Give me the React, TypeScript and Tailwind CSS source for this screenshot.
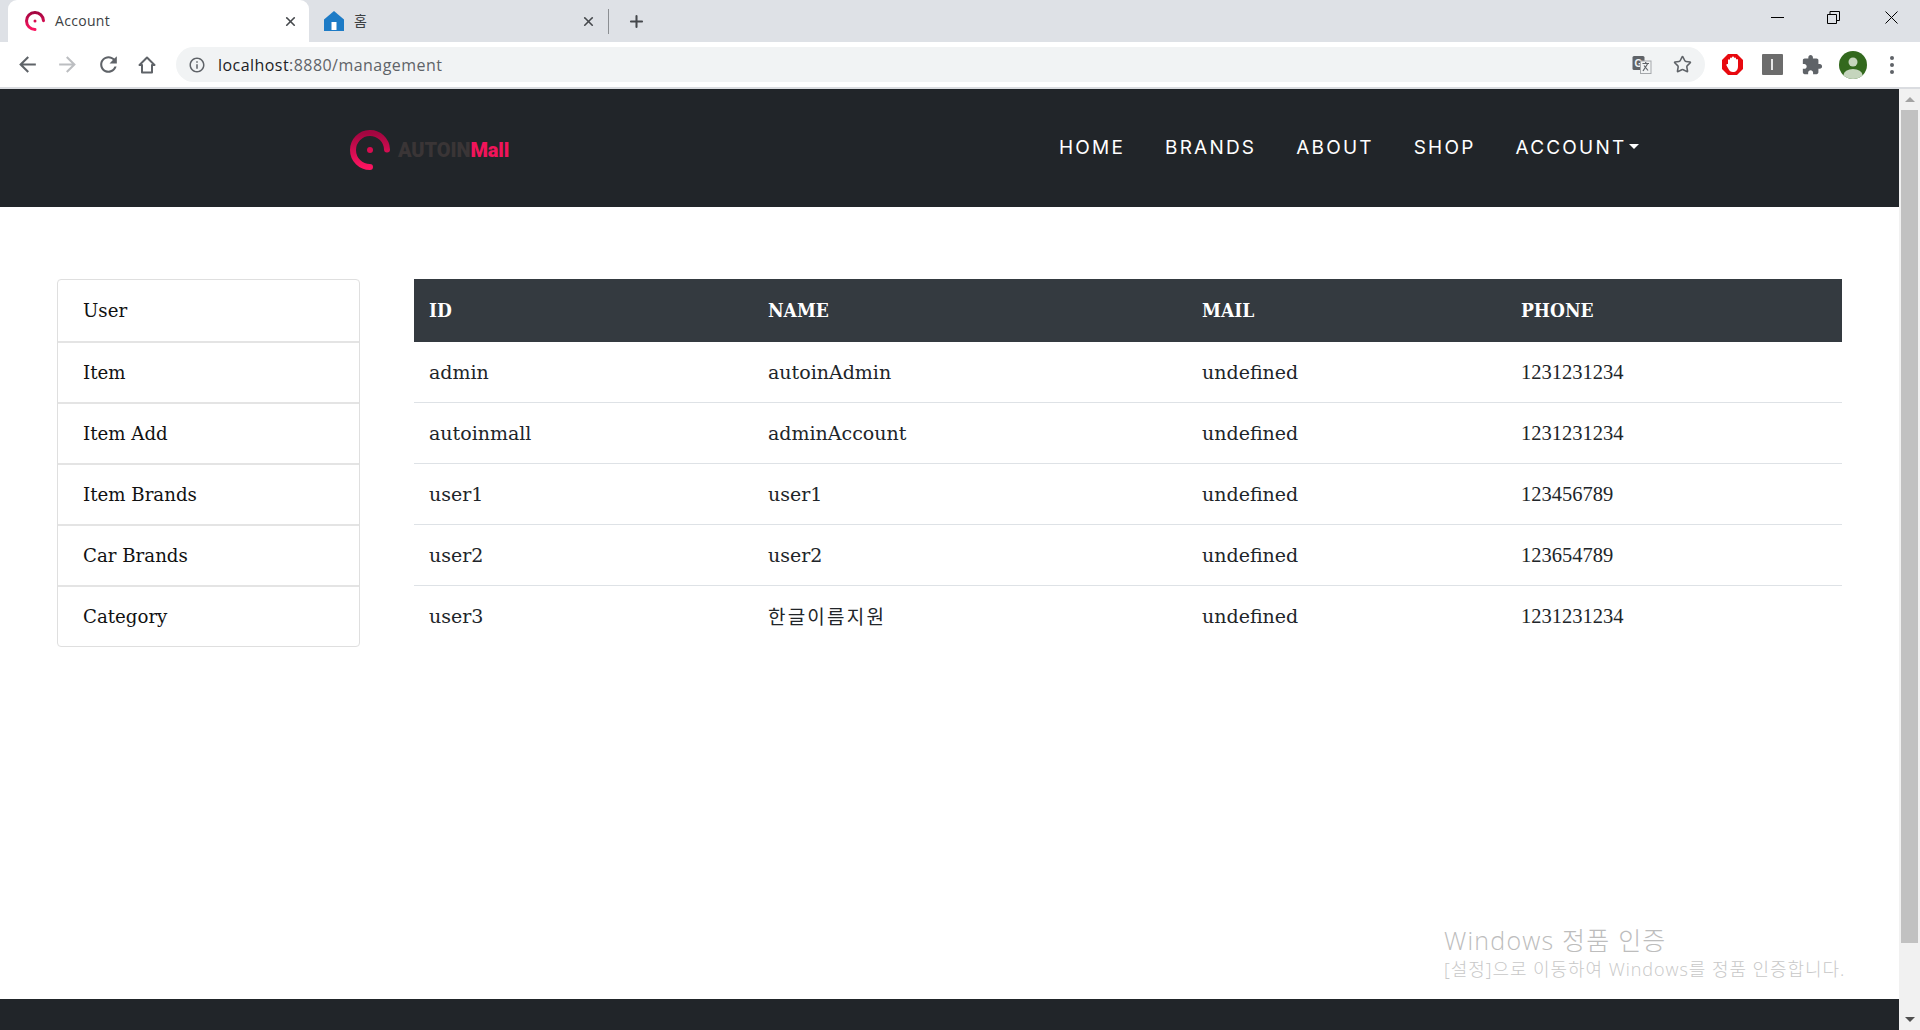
import { Star, X, Plus } from "lucide-react";

const SANS = "font-['Open_Sans','Noto_Sans_CJK_KR',sans-serif]";
const SLAB = "font-['DejaVu_Serif','Noto_Sans_CJK_KR',serif]";

const rows = [
  ["admin", "autoinAdmin", "undefined", "1231231234"],
  ["autoinmall", "adminAccount", "undefined", "1231231234"],
  ["user1", "user1", "undefined", "123456789"],
  ["user2", "user2", "undefined", "123654789"],
  ["user3", "한글이름지원", "undefined", "1231231234"],
];
const side = ["User", "Item", "Item Add", "Item Brands", "Car Brands", "Category"];
const nav = ["HOME", "BRANDS", "ABOUT", "SHOP"];

function Logo({ size, id }: { size: number; id: string }) {
  return (
    <svg width={size} height={size} viewBox="0 0 40 40" className="shrink-0">
      <defs>
        <linearGradient id={id} x1="0" y1="0" x2="0" y2="1">
          <stop offset="0" stopColor="#a30640" />
          <stop offset="1" stopColor="#fb1460" />
        </linearGradient>
      </defs>
      <path d="M37 19.500A17 17 0 1 0 20 37" fill="none" stroke={`url(#${id})`} strokeWidth="6" strokeLinecap="round" />
      <circle cx="20" cy="20" r="3" fill="#d80c50" />
    </svg>
  );
}

function Tab({ active, title, icon, shift }: { active?: boolean; title: string; icon: React.ReactNode; shift: string }) {
  return (
    <div className={`w-[301px] h-[42px] flex items-center rounded-t-[9px] ${shift} ${active ? "bg-white" : ""}`}>
      {icon}
      <span className={`ml-[10px] mb-[2px] flex-1 text-[14px] tracking-[0.3px] text-[#3c4043] ${SANS}`}>{title}</span>
      <X size={15} strokeWidth={2.6} className="text-[#45484c]" />
    </div>
  );
}

function Slot({ w, children }: { w: number; children: React.ReactNode }) {
  return <div className="flex items-center justify-center shrink-0" style={{ width: w }}>{children}</div>;
}

function Mat({ d, size, color }: { d: string; size: number; color: string }) {
  return (
    <svg width={size} height={size} viewBox="0 0 24 24" fill={color}>
      <path d={d} />
    </svg>
  );
}

const BACK = "M20 11H7.830l5.590-5.590L12 4l-8 8 8 8 1.410-1.410L7.830 13H20v-2z";
const FORWARD = "M4 11h12.170l-5.590-5.590L12 4l8 8-8 8-1.410-1.410L16.170 13H4v-2z";
const RELOAD = "M17.650 6.350C16.200 4.900 14.210 4 12 4c-4.420 0-7.990 3.580-7.990 8s3.570 8 7.990 8c3.730 0 6.840-2.550 7.730-6h-2.080c-.82 2.330-3.040 4-5.650 4-3.310 0-6-2.690-6-6s2.690-6 6-6c1.660 0 3.140.69 4.220 1.780L13 11h7V4l-2.350 2.350z";
const INFO = "M11 7h2v2h-2zm0 4h2v6h-2zm1-9C6.480 2 2 6.480 2 12s4.480 10 10 10 10-4.480 10-10S17.520 2 12 2zm0 18c-4.410 0-8-3.590-8-8s3.590-8 8-8 8 3.590 8 8-3.590 8-8 8z";
const EXT = "M20.500 11H19V7c0-1.100-.9-2-2-2h-4V3.500C13 2.120 11.880 1 10.500 1S8 2.120 8 3.500V5H4c-1.100 0-1.990.9-1.990 2v3.800H3.500c1.490 0 2.700 1.210 2.700 2.700s-1.210 2.700-2.700 2.700H2V20c0 1.100.9 2 2 2h3.800v-1.500c0-1.490 1.210-2.700 2.700-2.700 1.490 0 2.700 1.210 2.700 2.700V22H17c1.100 0 2-.9 2-2v-4h1.500c1.380 0 2.500-1.120 2.500-2.500S21.880 11 20.500 11z";

export default function App() {
  return (
    <div className="w-[1920px] h-[1030px] overflow-hidden relative flex flex-col bg-white">
      {/* tab strip */}
      <div className="h-[42px] bg-[#dee1e6] flex items-center pl-[8px] shrink-0">
        <Tab active title="Account" shift="pl-[17px] pr-[11px]" icon={<Logo size={20} id="fav" />} />
        <Tab
          title="홈"
          shift="pl-[15px] pr-[14px]"
          icon={
            <svg width="20" height="20" viewBox="0 0 20 20" className="shrink-0">
              <path d="M0 8.500 10 0l10 8.500V20H0z" fill="#1d7bc6" />
              <rect x="7.500" y="11" width="5" height="8" fill="#fff" />
            </svg>
          }
        />
        <div className="w-px h-[25px] bg-[#8b8e92] ml-[-2px]" />
        <Plus size={19} strokeWidth={2.6} className="ml-[18px] text-[#45484c]" />
        <div className="flex-1" />
        <div className="flex items-center h-full">
          <div className="w-[13px] h-px bg-black mr-[43px] mb-[8px]" />
          <svg width="13" height="13" viewBox="0 0 13 13" className="mr-[45px] mb-[8px]">
            <path d="M.5 3.500h9v9h-9zM3 3.500V.5h9.500v9H9.500" fill="none" stroke="#000" />
          </svg>
          <svg width="13" height="13" viewBox="0 0 13 13" className="mr-[22px] mb-[8px]">
            <path d="M.5.5l12 12M12.500.5l-12 12" stroke="#000" />
          </svg>
        </div>
      </div>

      {/* toolbar */}
      <div className="h-[47px] bg-white border-b-2 border-[#dadce0] flex items-start pt-[5px] shrink-0 pl-[7px]">
        <div className="flex items-center h-[35px]">
          <Slot w={40}><Mat d={BACK} size={25} color="#5f6368" /></Slot>
          <Slot w={41}><Mat d={FORWARD} size={25} color="#bcbec1" /></Slot>
          <Slot w={40}><Mat d={RELOAD} size={25} color="#5f6368" /></Slot>
          <Slot w={38}>
            <svg width="20" height="20" viewBox="0 0 20 20">
              <path d="M10 2.500 2.500 10H5v7.500h10V10h2.500z" fill="none" stroke="#5f6368" strokeWidth="2" strokeLinejoin="round" />
            </svg>
          </Slot>
        </div>
        <div className="ml-[10px] w-[1529px] h-[35px] rounded-full bg-[#f1f3f4] flex items-center pl-[12px] pr-[11px]">
          <Mat d={INFO} size={18} color="#5f6368" />
          <span className={`ml-[12px] flex-1 text-[16px] tracking-[0.45px] text-[#5f6368] ${SANS}`}>
            <span className="text-[#202124]">localhost</span>:8880/management
          </span>
          <svg width="20" height="20" viewBox="0 0 20 20" className="mr-[21px]">
            <rect x="0.500" y="1" width="12" height="14" rx="1.500" fill="#5f6368" />
            <text x="2.500" y="11.500" fontSize="10" fontWeight="700" fill="#f1f3f4" fontFamily="Liberation Sans, sans-serif">G</text>
            <rect x="8.500" y="6" width="10.500" height="12.500" fill="#f1f3f4" stroke="#a5a8ab" />
            <path d="M10.500 8.500h6.500M13.700 7v1.500M11 16l4.500-7M12 10.500l4 5" stroke="#5f6368" strokeWidth="1.200" fill="none" />
          </svg>
          <Star size={19} strokeWidth={2} className="text-[#5f6368] mr-[2px]" />
        </div>
        <div className="flex items-center h-[35px] ml-[7px]">
          <Slot w={40}>
            <svg width="21" height="21" viewBox="0 0 21 21">
              <path d="M6 0h9l6 6v9l-6 6H6l-6-6V6z" fill="#e8090f" />
              <path d="M6 10V6.200a1 1 0 0 1 2 0V4.500a1 1 0 0 1 2 0V3.500a1 1 0 0 1 2 0v1a1 1 0 0 1 2 0v1.500a1 1 0 0 1 2 0v6c0 4-2 6-5 6-2.500 0-3.500-1-4.500-3l-2-3.500c-.6-1.200.9-2 1.800-1z" fill="#fff" />
            </svg>
          </Slot>
          <Slot w={40}>
            <div className="w-[21px] h-[21px] bg-[#6c6c6c] flex items-center justify-center rounded-[1px]">
              <div className="w-[2px] h-[11px] bg-[#e6e6e6]" />
            </div>
          </Slot>
          <Slot w={40}><Mat d={EXT} size={22} color="#5f6368" /></Slot>
          <Slot w={41}>
            <svg width="28" height="28" viewBox="0 0 28 28">
              <clipPath id="av"><circle cx="14" cy="14" r="14" /></clipPath>
              <g clipPath="url(#av)">
                <rect width="28" height="28" fill="#33691e" />
                <circle cx="14" cy="11" r="4.500" fill="#c5d5bd" />
                <ellipse cx="14" cy="24" rx="9.500" ry="6" fill="#c5d5bd" />
              </g>
            </svg>
          </Slot>
          <Slot w={38}>
            <div className="flex flex-col gap-[3px]">
              <div className="w-[4px] h-[4px] rounded-full bg-[#5f6368]" />
              <div className="w-[4px] h-[4px] rounded-full bg-[#5f6368]" />
              <div className="w-[4px] h-[4px] rounded-full bg-[#5f6368]" />
            </div>
          </Slot>
        </div>
      </div>

      {/* viewport */}
      <div className="flex-1 flex min-h-0">
        <div className="flex-1 flex flex-col min-w-0">
          <header className="h-[118px] bg-[#212529] shrink-0 flex items-start">
            <div className="ml-[350px] mt-[41px] flex items-center w-[709px]">
              <Logo size={40} id="lg" />
              <span className="ml-[8px] text-[20px] font-black tracking-[-0.1px] font-['Roboto',sans-serif] text-[#3a3536]">
                AUTOIN<span className="text-[#f0145a]">Mall</span>
              </span>
            </div>
            <nav className="mt-[47px] flex items-center gap-[40px] text-white text-[19px] leading-[24px] tracking-[2.2px] font-['Inter',sans-serif]">
              {nav.map((n) => <span key={n}>{n}</span>)}
              <span className="flex items-center">
                ACCOUNT
                <span className="ml-[3px] mb-[4px] border-x-[5.500px] border-x-transparent border-t-[5.500px] border-t-white" />
              </span>
            </nav>
          </header>

          <main className={`flex-1 flex items-start gap-[54px] pt-[72px] px-[57px] text-[#212529] ${SLAB}`}>
            <ul className="w-[303px] shrink-0 border border-[#dfdfdf] rounded-[4px] text-[18.200px] text-[#111]">
              {side.map((s, i) => (
                <li key={s} className={`h-[61px] flex items-center pl-[25px] ${i ? "border-t-2 border-[#e4e4e4]" : ""}`}>{s}</li>
              ))}
            </ul>
            <table className="flex-1 table-fixed border-collapse text-[19px]">
              <colgroup>
                <col className="w-[339px]" />
                <col className="w-[434px]" />
                <col className="w-[319px]" />
                <col />
              </colgroup>
              <thead>
                <tr className="h-[63px] bg-[#343a40] text-white">
                  {["ID", "NAME", "MAIL", "PHONE"].map((h) => (
                    <th key={h} className="text-left font-bold pl-[15px] font-['DejaVu_Serif_Condensed','DejaVu_Serif',serif]">{h}</th>
                  ))}
                </tr>
              </thead>
              <tbody>
                {rows.map((r) => (
                  <tr key={r[0]} className="h-[61px] first:h-[60px] border-b border-[#dee2e6] last:border-b-0">
                    <td className="pl-[15px] pt-[1px]">{r[0]}</td>
                    <td className="pl-[15px] pt-[1px]">
                      {r[0] === "user3" ? (
                        <span className="font-['Noto_Sans_CJK_KR',sans-serif] font-normal tracking-[2.200px] text-[19px]">{r[1]}</span>
                      ) : r[1]}
                    </td>
                    <td className="pl-[15px] pt-[1px]">{r[2]}</td>
                    <td className="pl-[15px] pt-[1px] font-['Liberation_Serif',serif] text-[20.500px]">{r[3]}</td>
                  </tr>
                ))}
              </tbody>
            </table>
          </main>

          <footer className="h-[31px] bg-[#212529] shrink-0" />
        </div>

        {/* scrollbar */}
        <div className="w-[21px] bg-[#f1f1f1] flex flex-col items-center shrink-0">
          <div className="h-[21px] flex items-center justify-center">
            <div className="border-x-[5px] border-x-transparent border-b-[5px] border-b-[#a3a3a3]" />
          </div>
          <div className="w-[17px] h-[833px] bg-[#c1c1c1]" />
          <div className="flex-1" />
          <div className="h-[21px] flex items-center justify-center">
            <div className="border-x-[5px] border-x-transparent border-t-[5px] border-t-[#505050]" />
          </div>
        </div>
      </div>

      {/* activation watermark */}
      <div className={`absolute left-[1444px] top-[923px] pointer-events-none font-light ${SANS}`}>
        <div className="text-[25px] leading-[34px] tracking-[1.200px] text-[#bdbdbd]">Windows 정품 인증</div>
        <div className="text-[18px] leading-[25px] tracking-[0.950px] text-[#c8c8c8]">[설정]으로 이동하여 Windows를 정품 인증합니다.</div>
      </div>
    </div>
  );
}
